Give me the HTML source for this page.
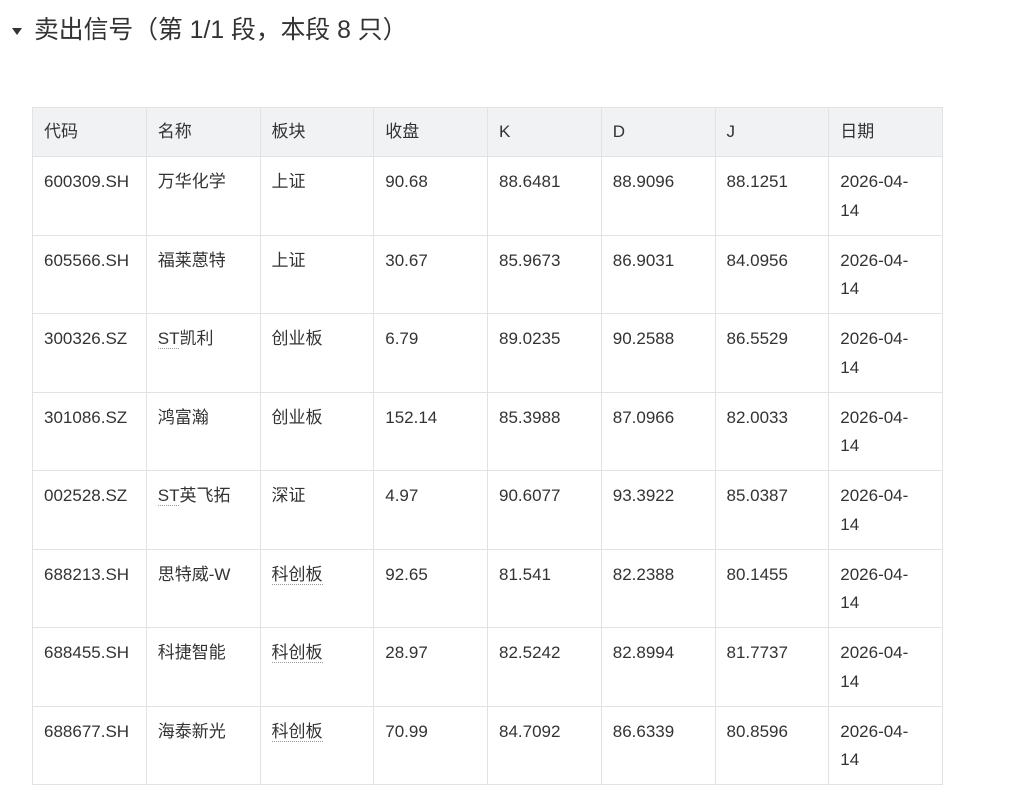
<!DOCTYPE html>
<html><head><meta charset="utf-8">
<style>
html,body{margin:0;padding:0;background:#fff;width:1016px;height:800px;overflow:hidden}
body{font-family:"Liberation Sans","Noto Sans CJK SC",sans-serif;color:#333}
.h{position:absolute;left:34px;top:15px;font-size:24.8px;line-height:32px;color:#333;font-family:"Liberation Sans","Noto Sans CJK SC",sans-serif}
.tri{position:absolute;left:12px;top:28px;width:0;height:0;border-left:5.5px solid transparent;border-right:5.5px solid transparent;border-top:7px solid #333}
table{position:absolute;left:32px;top:106.5px;border-collapse:collapse;width:911px;table-layout:fixed;font-size:17px}
td,th{border:1px solid #e2e2e2;padding:11px 11px 9.5px;line-height:28.5px;vertical-align:top;text-align:left;font-weight:normal;color:#333}
th{background:#f1f2f4;padding:10px 11px 10px}
.u{border-bottom:1px dotted #999}
</style></head><body>
<div class="tri"></div>
<div class="h">卖出信号（第 1/1 段，本段 8 只）</div>
<table>
<tr><th>代码</th><th>名称</th><th>板块</th><th>收盘</th><th>K</th><th>D</th><th>J</th><th>日期</th></tr>
<tr><td>600309.SH</td><td>万华化学</td><td>上证</td><td>90.68</td><td>88.6481</td><td>88.9096</td><td>88.1251</td><td>2026-04-<br>14</td></tr>
<tr><td>605566.SH</td><td>福莱蒽特</td><td>上证</td><td>30.67</td><td>85.9673</td><td>86.9031</td><td>84.0956</td><td>2026-04-<br>14</td></tr>
<tr><td>300326.SZ</td><td><span class="u">ST</span>凯利</td><td>创业板</td><td>6.79</td><td>89.0235</td><td>90.2588</td><td>86.5529</td><td>2026-04-<br>14</td></tr>
<tr><td>301086.SZ</td><td>鸿富瀚</td><td>创业板</td><td>152.14</td><td>85.3988</td><td>87.0966</td><td>82.0033</td><td>2026-04-<br>14</td></tr>
<tr><td>002528.SZ</td><td><span class="u">ST</span>英飞拓</td><td>深证</td><td>4.97</td><td>90.6077</td><td>93.3922</td><td>85.0387</td><td>2026-04-<br>14</td></tr>
<tr><td>688213.SH</td><td>思特威-W</td><td><span class="u">科创板</span></td><td>92.65</td><td>81.541</td><td>82.2388</td><td>80.1455</td><td>2026-04-<br>14</td></tr>
<tr><td>688455.SH</td><td>科捷智能</td><td><span class="u">科创板</span></td><td>28.97</td><td>82.5242</td><td>82.8994</td><td>81.7737</td><td>2026-04-<br>14</td></tr>
<tr><td>688677.SH</td><td>海泰新光</td><td><span class="u">科创板</span></td><td>70.99</td><td>84.7092</td><td>86.6339</td><td>80.8596</td><td>2026-04-<br>14</td></tr>
</table>
</body></html>
